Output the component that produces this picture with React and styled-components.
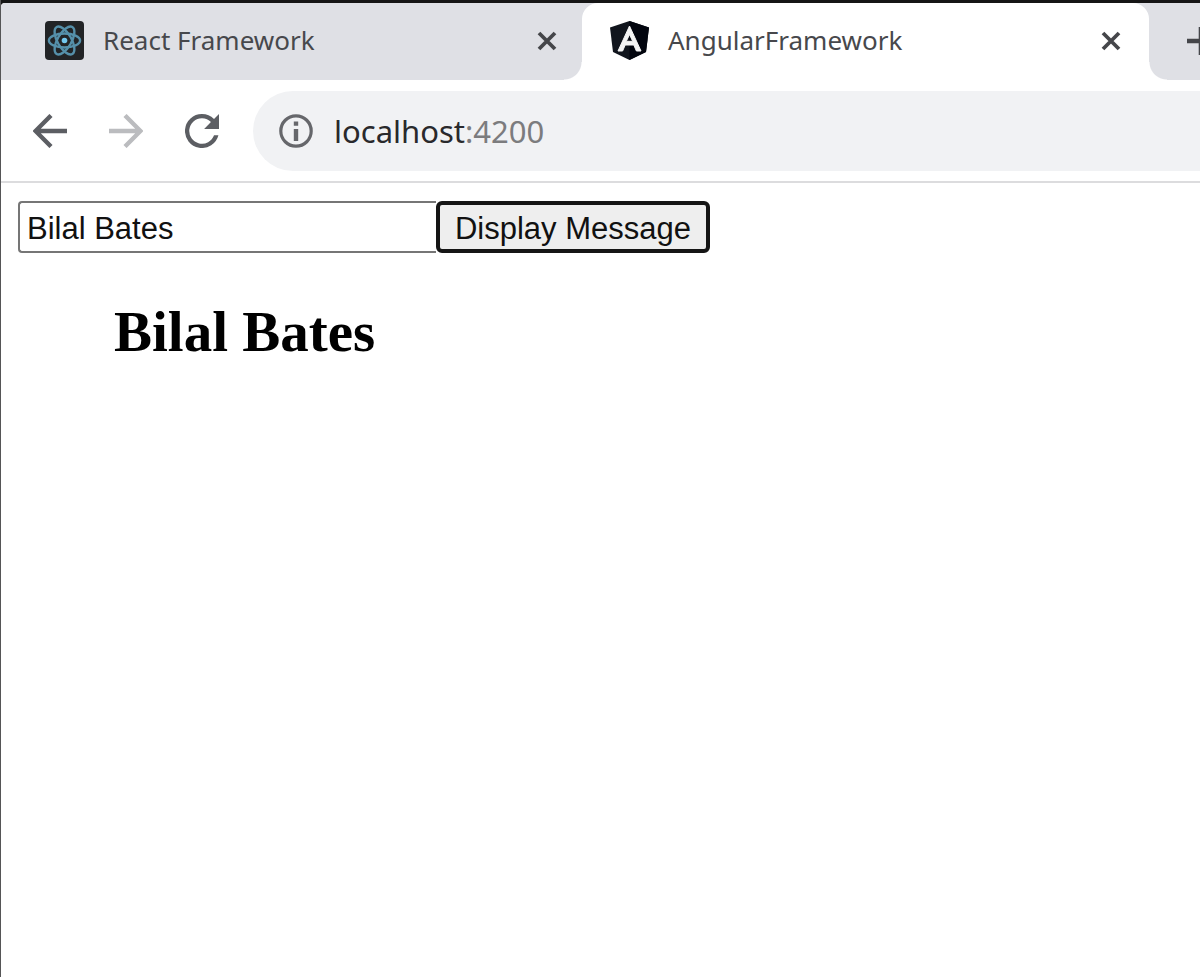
import React, { useState } from "react";
import styled, { createGlobalStyle } from "styled-components";

const GlobalStyle = createGlobalStyle`
  *, *::before, *::after { box-sizing: border-box; }
  body { margin: 0; background: #151515; }
  button { margin: 0; padding: 0; border: 0; background: none; }
  svg { display: block; flex: none; }
`;

const Window = styled.div`
  min-height: 100vh;
  padding-top: 3px;
  border-left: 1px solid #555556;
  background: #151515;
  overflow: hidden;
`;

const Frame = styled.div`
  min-height: calc(100vh - 3px);
  border-top-left-radius: 4px;
  background: #fff;
  overflow: hidden;
`;

const TabStrip = styled.div`
  display: flex;
  height: 77px;
  background: #dfe0e5;
  overflow: hidden;
`;

const Tab = styled.div`
  position: relative;
  display: flex;
  align-items: center;
  flex: none;
  width: ${(p) => (p.$active ? 567 : 581)}px;
  padding: 0 ${(p) => (p.$active ? 28 : 25)}px 2px ${(p) => (p.$active ? 28 : 44)}px;
  gap: 19px;
  border-radius: 16px 16px 0 0;
  background: ${(p) => (p.$active ? "#fff" : "transparent")};

  &::before,
  &::after {
    content: "";
    display: ${(p) => (p.$active ? "block" : "none")};
    position: absolute;
    bottom: 0;
    width: 18px;
    height: 18px;
  }
  &::before {
    right: 100%;
    background: radial-gradient(circle at 0 0, transparent 17px, #fff 18px);
  }
  &::after {
    left: 100%;
    background: radial-gradient(circle at 100% 0, transparent 17px, #fff 18px);
  }
`;

const TabTitle = styled.span`
  flex: 1;
  padding-bottom: 2px;
  font: 26px/38px "Noto Sans", "Open Sans", sans-serif;
  color: #47484c;
  white-space: nowrap;
`;

const IconButton = styled.button`
  display: flex;
  align-items: center;
  justify-content: center;
  flex: none;
  width: ${(p) => p.$width}px;
  height: 40px;
  color: ${(p) => p.$color || "#45464a"};
`;

const NewTab = styled(IconButton)`
  align-self: center;
  margin: 0 0 2px 32px;
`;

const Toolbar = styled.div`
  display: flex;
  align-items: center;
  height: 103px;
  padding-left: 11px;
  border-bottom: 2px solid #dcdcde;
`;

const AddressBar = styled.div`
  display: flex;
  align-items: center;
  flex: 1;
  gap: 21px;
  height: 80px;
  margin-left: 13px;
  padding-left: 26px;
  border-radius: 40px 0 0 40px;
  background: #f1f2f4;
  color: #66676b;
`;

const Address = styled.span`
  font: 31px/40px "Noto Sans", "Open Sans", sans-serif;
  color: #29292c;
`;

const Port = styled.span`
  color: #7c7c7e;
`;

const Page = styled.main`
  padding: 18px 17px;
`;

const MessageForm = styled.form`
  display: flex;
  height: 52px;
`;

const NameInput = styled.input`
  width: 418px;
  padding: 4px 7px 0;
  border: 2px solid #767676;
  border-right: 0;
  border-radius: 4px 0 0 4px;
  outline: 0;
  background: #fff;
  color: #111;
  font: 31px/36px "Liberation Sans", Arial, sans-serif;
`;

const SubmitButton = styled.button`
  width: 274px;
  padding-top: 4px;
  border: 4px solid #151515;
  border-radius: 6px;
  background: #eee;
  color: #111;
  font: 31px/36px "Liberation Sans", Arial, sans-serif;
  white-space: nowrap;
`;

const Message = styled.h2`
  margin: 47px 0 0 96px;
  font: bold 57px/64px "Liberation Serif", "Times New Roman", serif;
  color: #000;
`;

const ReactLogo = () => (
  <svg width="39" height="39" viewBox="0 0 39 39" aria-hidden="true">
    <rect width="39" height="39" rx="4" fill="#222426" />
    <g fill="none" stroke="#5590aa" strokeWidth="2.4">
      {[0, 60, 120].map((a) => (
        <ellipse key={a} cx="19.5" cy="19.5" rx="15.6" ry="7" transform={`rotate(${a} 19.5 19.5)`} />
      ))}
    </g>
    <circle cx="19.5" cy="19.5" r="2.8" fill="#72c7ed" />
  </svg>
);

const AngularLogo = () => (
  <svg width="39" height="39" viewBox="0 0 39 39" aria-hidden="true">
    <path d="M19.5 0 39 6.5 36 31 19.5 39 3 31 0 6.5Z" fill="#11151d" />
    <path d="M19.5 0 39 6.5 36 31 19.5 39Z" fill="#02050e" />
    <path
      fillRule="evenodd"
      d="M19.5 5 8 30h4.6l2.6-6h8.6l2.6 6H31Zm0 8.5 3.2 6.8h-6.4Z"
      fill="#f5f5f5"
      stroke="#f5f5f5"
      strokeWidth="1"
    />
  </svg>
);

const CloseIcon = () => (
  <svg width="20" height="20" viewBox="0 0 20 20" aria-hidden="true">
    <path d="m2 2 16 16M18 2 2 18" stroke="currentColor" strokeWidth="3.8" />
  </svg>
);

const PlusIcon = () => (
  <svg width="28" height="28" viewBox="0 0 28 28" aria-hidden="true">
    <path d="M14 0v28M0 14h28" stroke="currentColor" strokeWidth="4.6" />
  </svg>
);

const ArrowIcon = ({ forward }) => (
  <svg width="34" height="34" viewBox="0 0 34 34" aria-hidden="true">
    <path
      d={forward ? "M0 17h30M16 1.5 31.5 17 16 32.5" : "M34 17H4M18 1.5 2.5 17 18 32.5"}
      fill="none"
      stroke="currentColor"
      strokeWidth="4.4"
    />
  </svg>
);

const ReloadIcon = () => (
  <svg width="34" height="34" viewBox="4 4 16 16" aria-hidden="true">
    <path
      d="M17.65 6.35A7.96 7.96 0 0 0 12 4a8 8 0 1 0 7.73 10h-2.08A6 6 0 1 1 12 6c1.66 0 3.14.69 4.22 1.78L13 11h7V4z"
      fill="currentColor"
    />
  </svg>
);

const InfoIcon = () => (
  <svg width="34" height="34" viewBox="0 0 34 34" aria-hidden="true">
    <circle cx="17" cy="17" r="15.2" fill="none" stroke="currentColor" strokeWidth="3.2" />
    <path d="M17 7.5v4.2M17 15v12" stroke="currentColor" strokeWidth="4.4" />
  </svg>
);

export default function App() {
  const [name, setName] = useState("Bilal Bates");
  const [message, setMessage] = useState("Bilal Bates");

  const displayMessage = (event) => {
    event.preventDefault();
    setMessage(name);
  };

  return (
    <>
      <GlobalStyle />
      <Window>
        <Frame>
          <TabStrip>
            <Tab>
              <ReactLogo />
              <TabTitle>React Framework</TabTitle>
              <IconButton $width={20} aria-label="Close React Framework">
                <CloseIcon />
              </IconButton>
            </Tab>
            <Tab $active>
              <AngularLogo />
              <TabTitle>AngularFramework</TabTitle>
              <IconButton $width={20} aria-label="Close AngularFramework">
                <CloseIcon />
              </IconButton>
            </Tab>
            <NewTab $width={40} aria-label="New tab">
              <PlusIcon />
            </NewTab>
          </TabStrip>
          <Toolbar>
            <IconButton $width={76} $color="#5c5e63" aria-label="Back">
              <ArrowIcon />
            </IconButton>
            <IconButton $width={76} $color="#bbbcbf" aria-label="Forward">
              <ArrowIcon forward />
            </IconButton>
            <IconButton $width={76} $color="#5c5e63" aria-label="Reload">
              <ReloadIcon />
            </IconButton>
            <AddressBar>
              <InfoIcon />
              <Address>
                localhost<Port>:4200</Port>
              </Address>
            </AddressBar>
          </Toolbar>
          <Page>
            <MessageForm onSubmit={displayMessage}>
              <NameInput
                type="text"
                aria-label="Name"
                value={name}
                onChange={(event) => setName(event.target.value)}
              />
              <SubmitButton type="submit">Display Message</SubmitButton>
            </MessageForm>
            <Message>{message}</Message>
          </Page>
        </Frame>
      </Window>
    </>
  );
}
